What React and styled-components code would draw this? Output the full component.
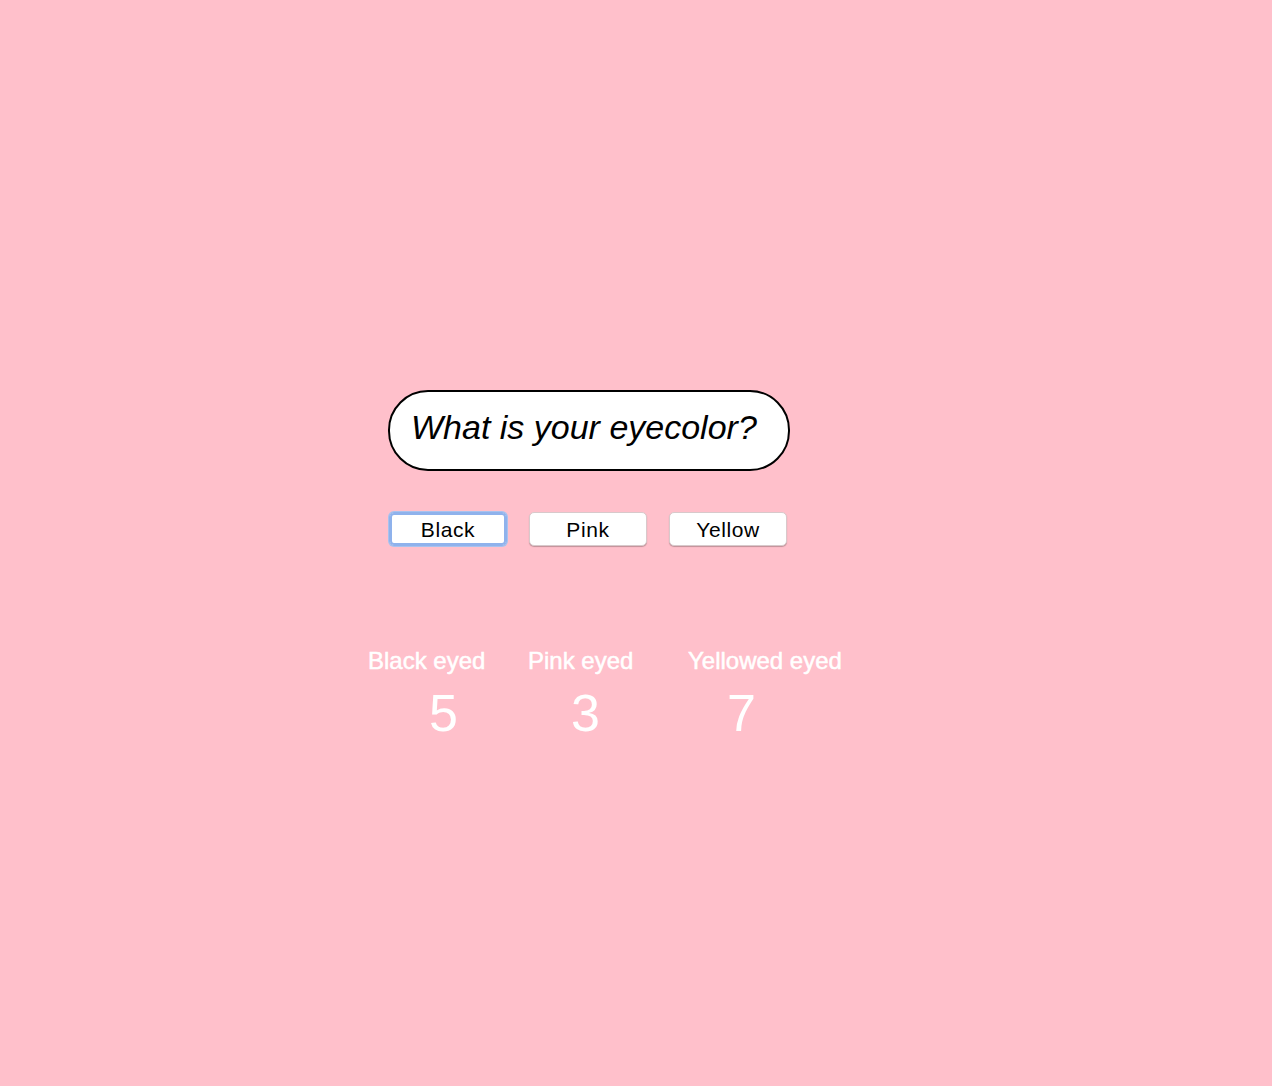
import React from "react";
import styled, { createGlobalStyle } from "styled-components";

const GlobalStyle = createGlobalStyle`
  html, body {
    margin: 0;
    padding: 0;
    background: #ffc0cb;
  }
`;

const Page = styled.div`
  min-height: 1086px;
  padding: 390px 0 0 388px;
  box-sizing: border-box;
  font-family: "Liberation Sans", Arial, sans-serif;
`;

const Question = styled.div`
  width: 402px;
  height: 81px;
  box-sizing: border-box;
  border: 2px solid #000;
  border-radius: 40px;
  background: #fff;
  display: flex;
  align-items: center;
  padding: 0 0 6px 21px;
  font-style: italic;
  font-size: 34px;
  color: #000;
`;

const ButtonRow = styled.div`
  display: flex;
  gap: 22px;
  margin-top: 41px;
  padding-left: 1px;
`;

const Choice = styled.button`
  width: 118px;
  height: 34px;
  box-sizing: border-box;
  background: #fff;
  border: 1px solid ${p => (p.focused ? "#8fb2ec" : "#d8c9cb")};
  box-shadow: ${p =>
    p.focused
      ? "0 0 0 2px #8fb2ec inset, 0 0 0 1px #a9c2ee"
      : "0 1px 1px rgba(0, 0, 0, 0.25)"};
  border-radius: 5px;
  font-family: "Liberation Sans", Arial, sans-serif;
  font-size: 21px;
  letter-spacing: 0.6px;
  color: #000;
  padding: 2px 0 0;
  cursor: pointer;
`;

const Stats = styled.div`
  display: flex;
  margin: 101px 0 0 -20px;
  color: #fff;
`;

const StatColumn = styled.div`
  width: 160px;
  display: flex;
  flex-direction: column;
`;

const StatLabel = styled.div`
  font-size: 24px;
  line-height: 28px;
  -webkit-text-stroke: 0.5px #fff;
`;

const StatValue = styled.div`
  font-size: 52px;
  line-height: 60px;
  margin-top: 8px;
  margin-left: ${p => p.offset}px;
`;

const stats = [
  { label: "Black eyed", value: 5, offset: 61 },
  { label: "Pink eyed", value: 3, offset: 43 },
  { label: "Yellowed eyed", value: 7, offset: 39 }
];

export default function App() {
  return (
    <>
      <GlobalStyle />
      <Page>
        <Question>What is your eyecolor?</Question>
        <ButtonRow>
          <Choice focused>Black</Choice>
          <Choice>Pink</Choice>
          <Choice>Yellow</Choice>
        </ButtonRow>
        <Stats>
          {stats.map(s => (
            <StatColumn key={s.label}>
              <StatLabel>{s.label}</StatLabel>
              <StatValue offset={s.offset}>{s.value}</StatValue>
            </StatColumn>
          ))}
        </Stats>
      </Page>
    </>
  );
}
